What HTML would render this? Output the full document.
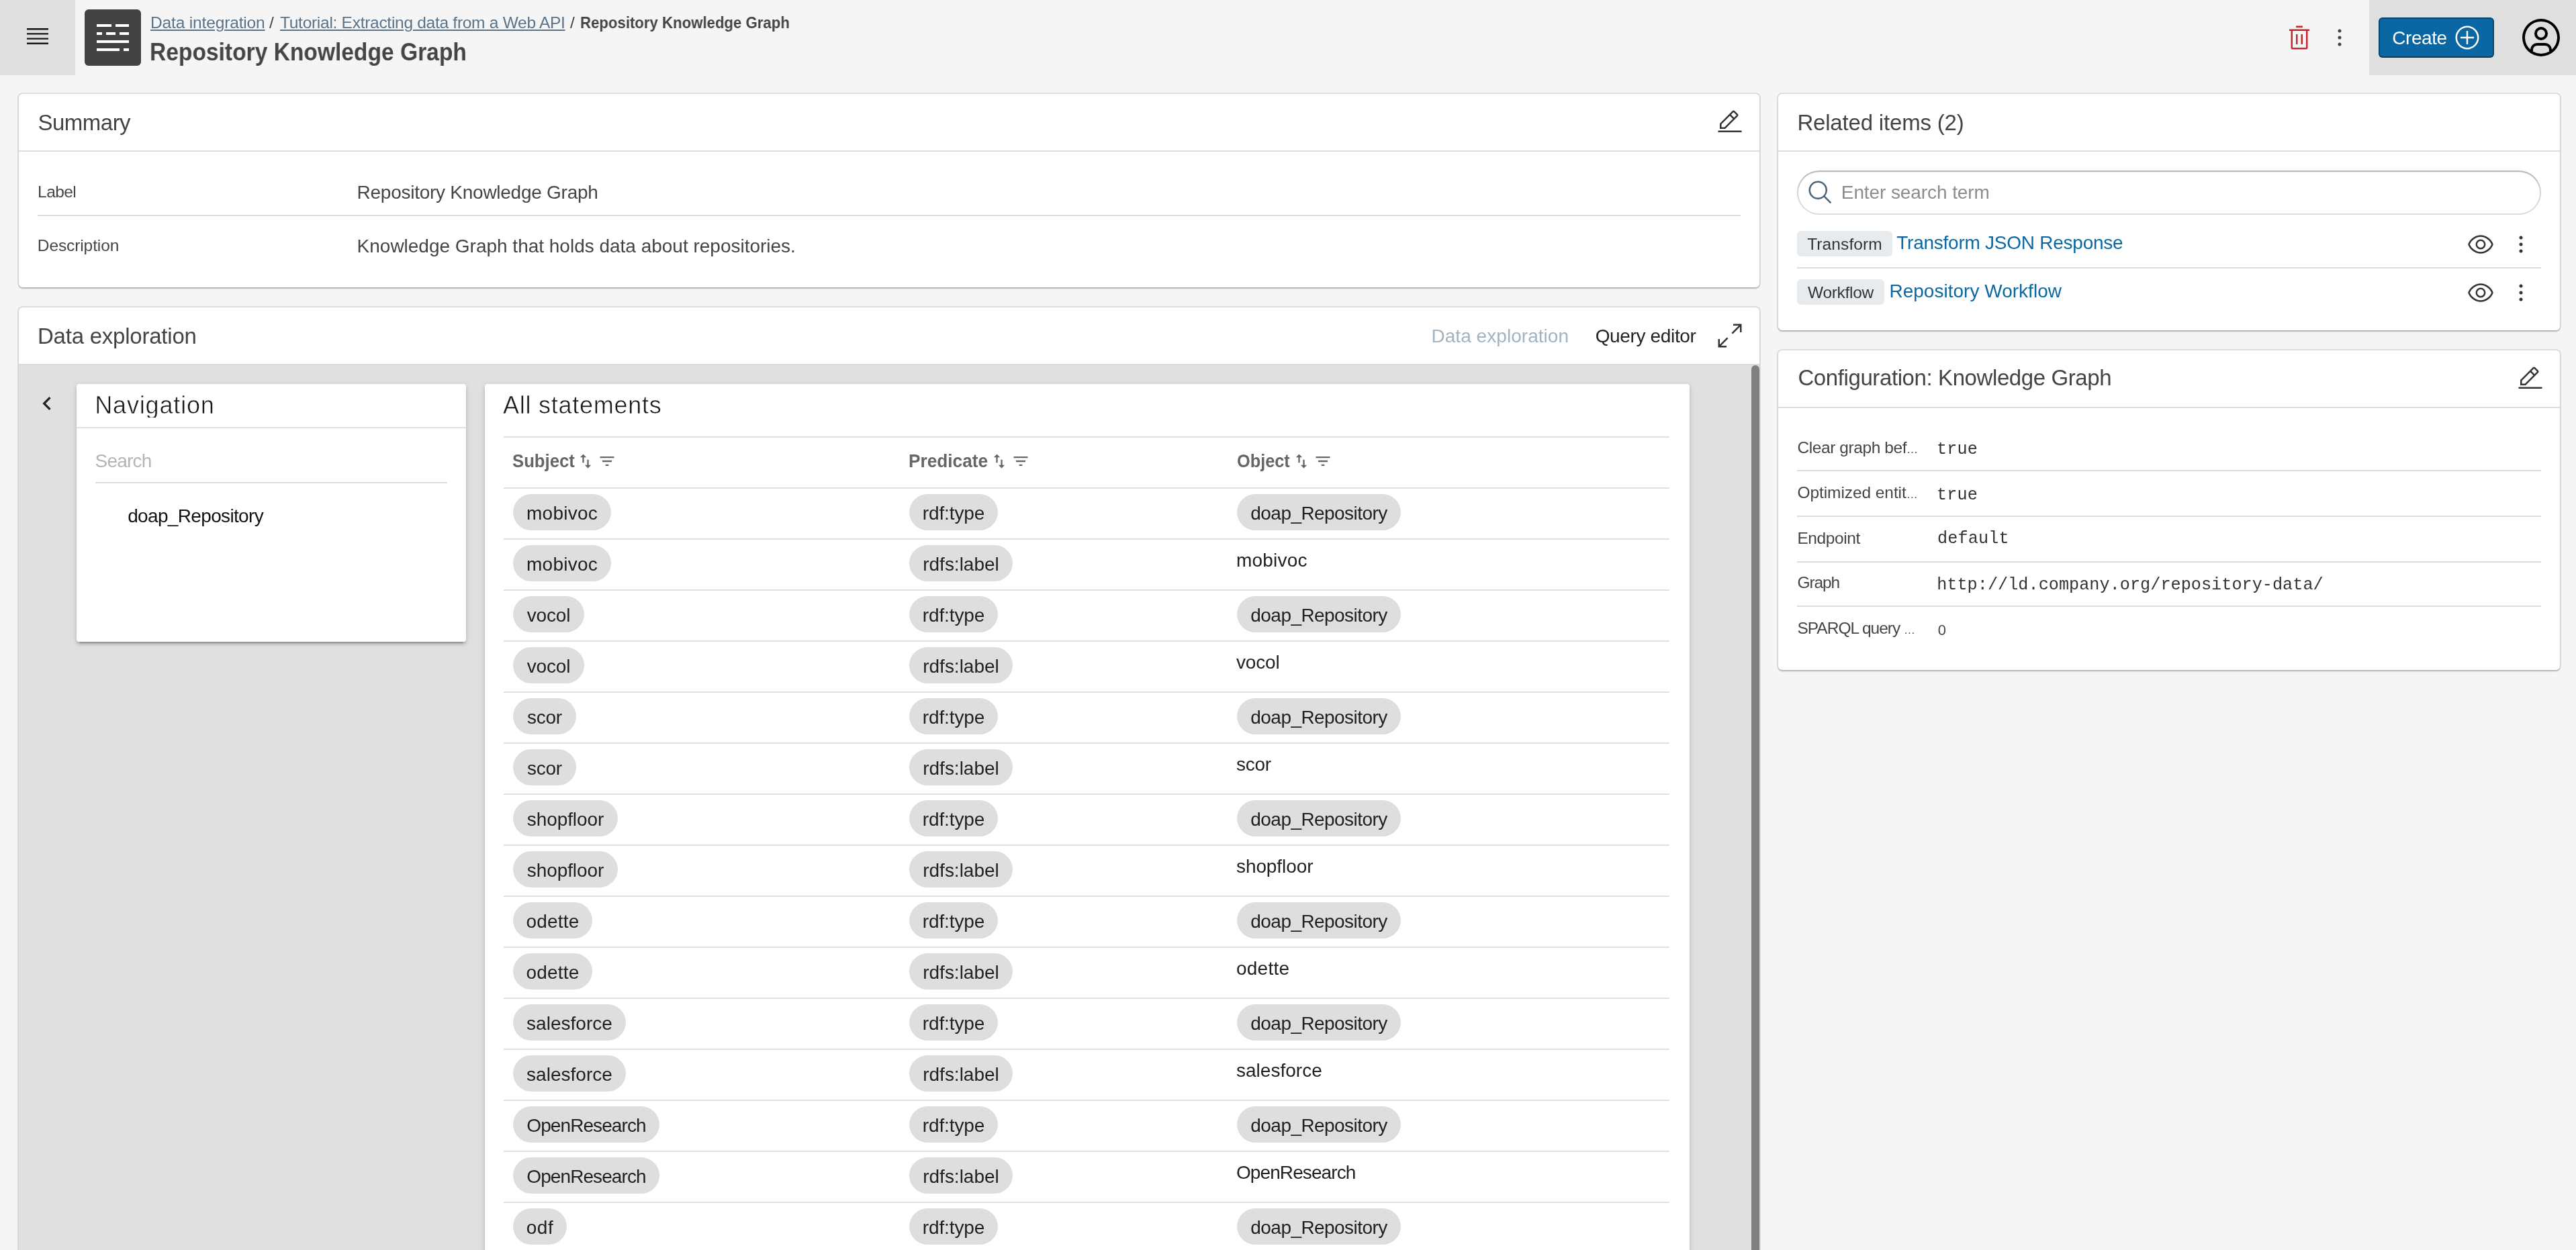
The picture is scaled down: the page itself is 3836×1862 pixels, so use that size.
<!DOCTYPE html>
<html lang="en">
<head>
<meta charset="utf-8">
<title>Repository Knowledge Graph</title>
<style>
*{box-sizing:border-box;margin:0;padding:0}
html,body{width:3836px;height:1862px;overflow:hidden;background:#f5f5f5;}
body{font-family:"Liberation Sans",sans-serif;color:#222;position:relative;font-size:28px;line-height:1;}
a{text-decoration:none;color:inherit}
svg{display:block}
.abs{position:absolute}
body>*,.mcard,.chip,.tag{will-change:transform}
.t{position:absolute;white-space:nowrap;line-height:1;}

/* header */
#menu{left:0;top:0;width:112px;height:112px;background:#dfdfdf}
#menu svg{position:absolute;left:36px;top:34px;width:40px;height:40px;fill:#161616}
#itemicon{left:126px;top:14px;width:84px;height:84px;background:#434343;border-radius:6px}
#itemicon i{position:absolute;height:4px;background:#fff;display:block}
.crumb{font-size:24.5px;color:#444}
.crumb.lk{color:#5a7389;text-decoration:underline;text-decoration-thickness:2px;text-underline-offset:2px}
b.crumb{font-weight:bold;color:#444;font-size:24.5px;transform-origin:0 50%}
#t-title{left:224px;top:58px;font-size:37px;font-weight:bold;transform-origin:0 50%;color:#444}
#hright{left:3528px;top:0;width:308px;height:112px;background:#dfdfdf}
#create{left:3542px;top:26px;width:172px;height:60px;background:#0a67a3;border-radius:6px;box-shadow:inset 0 0 0 2px rgba(16,22,26,.4),inset 0 -2px 0 rgba(16,22,26,.2);color:#fff}
#create span{position:absolute;left:22px;top:16px;font-size:28px;line-height:1}
#create svg{position:absolute;left:112px;top:10px;width:40px;height:40px;fill:#fff}

/* cards */
.card{position:absolute;background:#fff;border-radius:6px;box-shadow:0 0 0 2px rgba(16,22,26,.1),0 2px 2px rgba(16,22,26,.2)}
.ctitle{position:absolute;left:27px;font-size:33px;color:#444;white-space:nowrap;line-height:1}
.hline{position:absolute;left:0;right:0;height:2px;background:rgba(16,22,26,.15)}
.pname{position:absolute;font-size:24.5px;color:#444;white-space:nowrap;line-height:1}
.pval{position:absolute;font-size:28px;color:#444;white-space:nowrap;line-height:1}
.mono{font-family:"Liberation Mono",monospace;font-size:25.2px;color:#333}
.ico{position:absolute;fill:#333}
.el{font-style:normal;font-size:17px;letter-spacing:-0.5px}
.tag{position:absolute;height:38px;border-radius:6px;background:#e8ebee;color:#333;font-size:24.5px;line-height:38px;text-align:center;white-space:nowrap}
.tag span{position:relative;top:1px;display:inline-block}
.lnk{font-size:28px;color:#0a67a3}

/* data exploration */
#grayarea{left:0;top:84px;right:0;bottom:0;background:#e0e0e0;overflow:hidden}
.mcard{position:absolute;background:#fff;border-radius:4px;box-shadow:0 4px 4px 0 rgba(0,0,0,.14),0 6px 2px -4px rgba(0,0,0,.2),0 2px 10px 0 rgba(0,0,0,.12)}
.mtitle{position:absolute;font-size:36px;font-weight:normal;color:#1a1a1a;white-space:nowrap;line-height:1;height:36px;overflow:hidden;-webkit-text-stroke:0.55px #fff}
.tl{position:absolute;left:28px;width:1736px;height:2px;background:#e0e0e0}
.th{position:absolute;font-size:28px;font-weight:bold;color:#666;white-space:nowrap;line-height:1}
.th span{display:inline-block;transform-origin:0 50%}
.th svg{position:absolute;width:28px;height:28px;fill:#666;top:0}
.chip{position:absolute;height:54px;border-radius:27px;background:#dedede;color:#212121;font-size:28px;line-height:54px;text-align:center;white-space:nowrap}
.chip span{position:relative;top:2px;display:inline-block}
.plain{position:absolute;font-size:28px;color:#212121;white-space:nowrap;line-height:1}
/*FIT*/
#t-b1{letter-spacing:-0.15px;margin-left:-0.5px;margin-top:1.3px}
#t-s1{margin-left:1px}
#t-b2{letter-spacing:-0.28px;margin-left:1.4px;margin-top:1.3px}
#t-s2{margin-left:1px}
#t-b3{letter-spacing:0px;transform:scaleX(0.9054);margin-left:0.4px;margin-top:1.3px}
#t-title{letter-spacing:0px;transform:scaleX(0.9071);margin-left:-1.0px;margin-top:0.9px}
#t-create{letter-spacing:-0.42px;margin-left:-1.8px;margin-top:1.1px}
#t-sum{letter-spacing:-0.51px;margin-left:1.5px;margin-top:-7.7px}
#t-lab{letter-spacing:-0.58px;margin-left:1.1px;margin-top:-3.3px}
#t-desc{letter-spacing:-0.1px;margin-left:0.8px;margin-top:-3.5px}
#t-val1{letter-spacing:-0.26px;margin-left:0.6px;margin-top:-1.5px}
#t-val2{letter-spacing:-0.01px;margin-left:0.6px;margin-top:-1.1px}
#t-de{letter-spacing:-0.23px;margin-left:1.0px;margin-top:-8.5px}
#t-tab1{letter-spacing:0.04px;margin-left:0.5px;margin-top:-1.5px}
#t-tab2{letter-spacing:-0.35px;margin-left:1.7px;margin-top:-1.5px}
#t-nav{letter-spacing:0.84px;margin-left:-0.8px;margin-top:0.1px}
#t-srch{letter-spacing:-0.8px;margin-left:-0.4px;margin-top:0.7px}
#t-doap{letter-spacing:-0.66px;margin-left:0.2px;margin-top:0.9px}
#t-all{letter-spacing:0.74px;margin-left:-1px;margin-top:-0.1px}
#t-th1{letter-spacing:0px;transform:scaleX(0.9184);margin-left:-1px}
#t-th2{letter-spacing:0px;transform:scaleX(0.937);margin-left:-1.3px}
#t-th3{letter-spacing:0px;transform:scaleX(0.9044);margin-left:-0.5px}
.c-mobivoc span{letter-spacing:0.24px}
.c-vocol span{letter-spacing:-0.19px}
.c-scor span{letter-spacing:-0.28px}
.c-shopfloor span{letter-spacing:-0.09px}
.c-odette span{letter-spacing:0.22px}
.c-salesforce span{letter-spacing:0.02px}
.c-OpenResearch span{letter-spacing:-0.91px}
.c-odf span{letter-spacing:0.55px}
.c-rdftype span{letter-spacing:-0.14px}
.c-rdfslabel span{letter-spacing:-0.01px}
.c-doapRepository span{letter-spacing:-0.56px}
.p-mobivoc{letter-spacing:0.2px}
#t-rel{letter-spacing:-0.18px;margin-left:1.4px;margin-top:-8.5px}
#t-ph{letter-spacing:-0.09px;margin-left:1.8px;margin-top:1.1px}
#t-tag1{letter-spacing:0.11px}
#t-l1{letter-spacing:-0.25px;margin-left:2.3px;margin-top:0.9px}
#t-tag2{letter-spacing:-0.3px}
#t-l2{letter-spacing:0.02px;margin-left:1.4px;margin-top:0.9px}
#t-cfg{letter-spacing:-0.4px;margin-left:2.4px;margin-top:-9.9px}
#t-c1{letter-spacing:-0.42px;margin-left:0.5px;margin-top:1.1px}
#t-c2{letter-spacing:-0.08px;margin-left:0.5px;margin-top:0.1px}
#t-c3{letter-spacing:-0.39px;margin-left:0.4px;margin-top:1.1px}
#t-c4{letter-spacing:-1.07px;margin-left:0.4px;margin-top:0.9px}
#t-c5{letter-spacing:-1.0px;margin-left:0.5px;margin-top:1.3px}
#t-v1{letter-spacing:0.16px;margin-left:-0.1px;margin-top:1.3px}
#t-v2{letter-spacing:0.16px;margin-left:-0.1px;margin-top:0.5px}
#t-v3{letter-spacing:0.15px;margin-left:0.9px;margin-top:0.3px}
#t-v4{letter-spacing:0.03px;margin-left:0.2px;margin-top:0.9px}
#t-v5{letter-spacing:-0.9px;margin-left:1.8px;margin-top:0.6px}
.p-vocol{letter-spacing:-0.19px}
.p-scor{letter-spacing:-0.28px}
.p-shopfloor{letter-spacing:-0.09px}
.p-odette{letter-spacing:0.22px}
.p-salesforce{letter-spacing:0.02px}
.p-OpenResearch{letter-spacing:-0.91px}
.p-odf{letter-spacing:0.55px}
.p-rdftype{letter-spacing:-0.14px}
.p-rdfslabel{letter-spacing:-0.01px}
.p-doapRepository{letter-spacing:-0.56px}
/*ENDFIT*/
</style>
</head>
<body>

<!-- ======= HEADER ======= -->
<div id="menu" class="abs"><svg viewBox="0 0 20 20"><path d="M2 14.8H18V16H2zM2 11.2H18V12.4H2zM2 7.6H18V8.8H2zM2 4H18V5.2H2z"/></svg></div>
<div id="itemicon" class="abs">
 <i style="left:18px;top:22px;width:22px"></i><i style="left:46px;top:22px;width:20px"></i>
 <i style="left:18px;top:34px;width:8px"></i><i style="left:32px;top:34px;width:14px"></i><i style="left:52px;top:34px;width:14px"></i>
 <i style="left:18px;top:46px;width:48px"></i>
 <i style="left:18px;top:58px;width:34px"></i><i style="left:58px;top:58px;width:8px"></i>
</div>
<a class="t crumb lk" id="t-b1" style="left:224px;top:21px">Data integration</a>
<span class="t crumb" id="t-s1" style="left:400px;top:22px">/</span>
<a class="t crumb lk" id="t-b2" style="left:416px;top:21px">Tutorial: Extracting data from a Web API</a>
<span class="t crumb" id="t-s2" style="left:848px;top:22px">/</span>
<b class="t crumb" id="t-b3" style="left:864px;top:21px">Repository Knowledge Graph</b>
<div id="t-title" class="t">Repository Knowledge Graph</div>

<svg class="ico" style="left:3404px;top:35.5px;width:40px;height:40px;fill:#c7262f" viewBox="0 0 32 32"><path d="M12 12H14V24H12zM18 12H20V24H18z"/><path d="M4 6V8H6V28a2 2 0 002 2H24a2 2 0 002-2V8h2V6zM8 28V8H24V28zM12 2H20V4H12z"/></svg>
<svg class="ico" style="left:3464px;top:36px;width:40px;height:40px;fill:#444" viewBox="0 0 32 32"><circle cx="16" cy="8" r="2"/><circle cx="16" cy="16" r="2"/><circle cx="16" cy="24" r="2"/></svg>
<div id="hright" class="abs"></div>
<div id="create" class="abs"><span id="t-create">Create</span><svg viewBox="0 0 32 32"><path d="M16,4c6.6,0,12,5.4,12,12s-5.4,12-12,12S4,22.6,4,16S9.4,4,16,4 M16,2C8.3,2,2,8.3,2,16s6.3,14,14,14s14-6.3,14-14 S23.7,2,16,2z"/><path d="M24 15L17 15 17 8 15 8 15 15 8 15 8 17 15 17 15 24 17 24 17 17 24 17z"/></svg></div>
<svg class="ico" style="left:3752px;top:24px;width:64px;height:64px;fill:#000" viewBox="0 0 32 32"><path d="M16,8a5,5,0,1,0,5,5A5,5,0,0,0,16,8Zm0,8a3,3,0,1,1,3-3A3.0034,3.0034,0,0,1,16,16Z"/><path d="M16,2A14,14,0,1,0,30,16,14.0158,14.0158,0,0,0,16,2ZM10,26.3765V25a3.0033,3.0033,0,0,1,3-3h6a3.0033,3.0033,0,0,1,3,3v1.3765a11.8989,11.8989,0,0,1-12,0Zm13.9925-1.4507A5.0016,5.0016,0,0,0,19,20H13a5.0016,5.0016,0,0,0-4.9925,4.9258,12,12,0,1,1,15.985,0Z"/></svg>

<!-- ======= SUMMARY CARD ======= -->
<div class="card" id="summary" style="left:28px;top:140px;width:2592px;height:288px">
 <div class="ctitle" id="t-sum" style="top:34px">Summary</div>
 <svg class="ico" style="left:2527.5px;top:21.5px;width:40px;height:40px" viewBox="0 0 32 32"><path d="M2 26H30V28H2zM25.4 9c.8-.8.8-2 0-2.8 0 0 0 0 0 0l-3.6-3.6c-.8-.8-2-.8-2.8 0 0 0 0 0 0 0l-15 15V24h6.4L25.4 9zM20.4 4L24 7.6l-3 3L17.4 7 20.4 4zM6 22v-3.6l10-10 3.6 3.6-10 10H6z"/></svg>
 <div class="hline" style="top:84px"></div>
 <div class="pname" id="t-lab" style="left:27px;top:137px">Label</div>
 <div class="pval" id="t-val1" style="left:503px;top:134px">Repository Knowledge Graph</div>
 <div class="hline" style="top:180px;left:28px;right:28px"></div>
 <div class="pname" id="t-desc" style="left:27px;top:217px">Description</div>
 <div class="pval" id="t-val2" style="left:503px;top:214px">Knowledge Graph that holds data about repositories.</div>
</div>

<!-- ======= DATA EXPLORATION CARD ======= -->
<div class="card" id="explore" style="left:28px;top:458px;width:2592px;height:1500px">
 <div class="ctitle" id="t-de" style="top:34px">Data exploration</div>
 <div class="t" id="t-tab1" style="left:2103px;top:30px;font-size:28px;color:#a3b3c0">Data exploration</div>
 <div class="t" id="t-tab2" style="left:2346px;top:30px;font-size:28px;color:#222">Query editor</div>
 <svg class="ico" style="left:2528px;top:21.5px;width:40px;height:40px" viewBox="0 0 32 32"><path d="M20 2L20 4 26.586 4 18 12.582 19.414 14 28 5.414 28 12 30 12 30 2 20 2zM14 19.416L12.592 18 4 26.586 4 20 2 20 2 30 12 30 12 28 5.414 28 14 19.416z"/></svg>
 <div id="grayarea" class="abs">
  <div class="abs" style="left:0;right:0;top:0;height:2px;background:#d8dadc"></div>
  <svg class="ico" style="left:21.5px;top:39px;width:40px;height:40px;fill:#222" viewBox="0 0 24 24"><path d="M15.41 7.41L14 6l-6 6 6 6 1.41-1.41L10.83 12z"/></svg>
  <!-- navigation -->
  <div class="mcard" style="left:86px;top:30px;width:580px;height:384px">
   <div class="mtitle" id="t-nav" style="left:28px;top:14px">Navigation</div>
   <div class="abs" style="left:0;right:0;top:64px;height:2px;background:#e0e0e0"></div>
   <div class="t" id="t-srch" style="left:28px;top:100px;font-size:28px;color:#b5b5b5">Search</div>
   <div class="abs" style="left:28px;right:28px;top:146px;height:2px;background:#dcdcdc"></div>
   <div class="t" id="t-doap" style="left:76px;top:182px;font-size:28px;color:#111">doap_Repository</div>
  </div>
  <!-- statements -->
  <div class="mcard" id="stm" style="left:694px;top:30px;width:1794px;height:1500px">
   <div class="mtitle" id="t-all" style="left:28px;top:14px">All statements</div>
   <div class="th" style="left:42px;top:101px"><span id="t-th1">Subject</span><svg style="left:94px" viewBox="0 0 24 24"><path d="M9 3L5 6.99h3V14h2V6.99h3L9 3zm7 14.01V10h-2v7.01h-3L15 21l4-3.99h-3z"/></svg><svg style="left:126px" viewBox="0 0 24 24"><path d="M10 18h4v-2h-4v2zM3 6v2h18V6H3zm3 7h12v-2H6v2z"/></svg></div>
   <div class="th" style="left:632px;top:101px"><span id="t-th2">Predicate</span><svg style="left:120px" viewBox="0 0 24 24"><path d="M9 3L5 6.99h3V14h2V6.99h3L9 3zm7 14.01V10h-2v7.01h-3L15 21l4-3.99h-3z"/></svg><svg style="left:152px" viewBox="0 0 24 24"><path d="M10 18h4v-2h-4v2zM3 6v2h18V6H3zm3 7h12v-2H6v2z"/></svg></div>
   <div class="th" style="left:1120px;top:101px"><span id="t-th3">Object</span><svg style="left:82px" viewBox="0 0 24 24"><path d="M9 3L5 6.99h3V14h2V6.99h3L9 3zm7 14.01V10h-2v7.01h-3L15 21l4-3.99h-3z"/></svg><svg style="left:114px" viewBox="0 0 24 24"><path d="M10 18h4v-2h-4v2zM3 6v2h18V6H3zm3 7h12v-2H6v2z"/></svg></div>
   <!--ROWS-->
   <div class="tl" style="top:78px"></div>
   <div class="tl" style="top:154px"></div>
   <div class="tl" style="top:230px"></div>
   <div class="chip c-mobivoc" style="left:42px;top:164px;width:146px"><span>mobivoc</span></div>
   <div class="chip c-rdftype" style="left:632px;top:164px;width:132px"><span>rdf:type</span></div>
   <div class="chip c-doapRepository" style="left:1120px;top:164px;width:244px"><span>doap_Repository</span></div>
   <div class="tl" style="top:306px"></div>
   <div class="chip c-mobivoc" style="left:42px;top:240px;width:146px"><span>mobivoc</span></div>
   <div class="chip c-rdfslabel" style="left:632px;top:240px;width:154px"><span>rdfs:label</span></div>
   <div class="plain p-mobivoc" style="left:1119px;top:249px">mobivoc</div>
   <div class="tl" style="top:382px"></div>
   <div class="chip c-vocol" style="left:42px;top:316px;width:106px"><span>vocol</span></div>
   <div class="chip c-rdftype" style="left:632px;top:316px;width:132px"><span>rdf:type</span></div>
   <div class="chip c-doapRepository" style="left:1120px;top:316px;width:244px"><span>doap_Repository</span></div>
   <div class="tl" style="top:458px"></div>
   <div class="chip c-vocol" style="left:42px;top:392px;width:106px"><span>vocol</span></div>
   <div class="chip c-rdfslabel" style="left:632px;top:392px;width:154px"><span>rdfs:label</span></div>
   <div class="plain p-vocol" style="left:1119px;top:401px">vocol</div>
   <div class="tl" style="top:534px"></div>
   <div class="chip c-scor" style="left:42px;top:468px;width:94px"><span>scor</span></div>
   <div class="chip c-rdftype" style="left:632px;top:468px;width:132px"><span>rdf:type</span></div>
   <div class="chip c-doapRepository" style="left:1120px;top:468px;width:244px"><span>doap_Repository</span></div>
   <div class="tl" style="top:610px"></div>
   <div class="chip c-scor" style="left:42px;top:544px;width:94px"><span>scor</span></div>
   <div class="chip c-rdfslabel" style="left:632px;top:544px;width:154px"><span>rdfs:label</span></div>
   <div class="plain p-scor" style="left:1119px;top:553px">scor</div>
   <div class="tl" style="top:686px"></div>
   <div class="chip c-shopfloor" style="left:42px;top:620px;width:156px"><span>shopfloor</span></div>
   <div class="chip c-rdftype" style="left:632px;top:620px;width:132px"><span>rdf:type</span></div>
   <div class="chip c-doapRepository" style="left:1120px;top:620px;width:244px"><span>doap_Repository</span></div>
   <div class="tl" style="top:762px"></div>
   <div class="chip c-shopfloor" style="left:42px;top:696px;width:156px"><span>shopfloor</span></div>
   <div class="chip c-rdfslabel" style="left:632px;top:696px;width:154px"><span>rdfs:label</span></div>
   <div class="plain p-shopfloor" style="left:1119px;top:705px">shopfloor</div>
   <div class="tl" style="top:838px"></div>
   <div class="chip c-odette" style="left:42px;top:772px;width:118px"><span>odette</span></div>
   <div class="chip c-rdftype" style="left:632px;top:772px;width:132px"><span>rdf:type</span></div>
   <div class="chip c-doapRepository" style="left:1120px;top:772px;width:244px"><span>doap_Repository</span></div>
   <div class="tl" style="top:914px"></div>
   <div class="chip c-odette" style="left:42px;top:848px;width:118px"><span>odette</span></div>
   <div class="chip c-rdfslabel" style="left:632px;top:848px;width:154px"><span>rdfs:label</span></div>
   <div class="plain p-odette" style="left:1119px;top:857px">odette</div>
   <div class="tl" style="top:990px"></div>
   <div class="chip c-salesforce" style="left:42px;top:924px;width:168px"><span>salesforce</span></div>
   <div class="chip c-rdftype" style="left:632px;top:924px;width:132px"><span>rdf:type</span></div>
   <div class="chip c-doapRepository" style="left:1120px;top:924px;width:244px"><span>doap_Repository</span></div>
   <div class="tl" style="top:1066px"></div>
   <div class="chip c-salesforce" style="left:42px;top:1000px;width:168px"><span>salesforce</span></div>
   <div class="chip c-rdfslabel" style="left:632px;top:1000px;width:154px"><span>rdfs:label</span></div>
   <div class="plain p-salesforce" style="left:1119px;top:1009px">salesforce</div>
   <div class="tl" style="top:1142px"></div>
   <div class="chip c-OpenResearch" style="left:42px;top:1076px;width:218px"><span>OpenResearch</span></div>
   <div class="chip c-rdftype" style="left:632px;top:1076px;width:132px"><span>rdf:type</span></div>
   <div class="chip c-doapRepository" style="left:1120px;top:1076px;width:244px"><span>doap_Repository</span></div>
   <div class="tl" style="top:1218px"></div>
   <div class="chip c-OpenResearch" style="left:42px;top:1152px;width:218px"><span>OpenResearch</span></div>
   <div class="chip c-rdfslabel" style="left:632px;top:1152px;width:154px"><span>rdfs:label</span></div>
   <div class="plain p-OpenResearch" style="left:1119px;top:1161px">OpenResearch</div>
   <div class="tl" style="top:1294px"></div>
   <div class="chip c-odf" style="left:42px;top:1228px;width:80px"><span>odf</span></div>
   <div class="chip c-rdftype" style="left:632px;top:1228px;width:132px"><span>rdf:type</span></div>
   <div class="chip c-doapRepository" style="left:1120px;top:1228px;width:244px"><span>doap_Repository</span></div>
   <!--/ROWS-->
  </div>
  <div class="abs" style="left:2580px;top:2px;width:12px;height:1500px;background:#808080;border-radius:6px"></div>
 </div>
</div>

<!-- ======= RELATED ITEMS ======= -->
<div class="card" id="related" style="left:2648px;top:140px;width:1164px;height:352px">
 <div class="ctitle" id="t-rel" style="top:34px">Related items (2)</div>
 <div class="hline" style="top:84px"></div>
 <div class="abs" id="search" style="left:28px;top:114px;width:1108px;height:66px;border-radius:33px;background:#fff;box-shadow:inset 0 0 0 2px rgba(16,22,26,.15),inset 0 2px 2px rgba(16,22,26,.2)"></div>
 <svg class="ico" style="left:42.5px;top:126.5px;width:40px;height:40px;fill:#4c637a" viewBox="0 0 32 32"><path d="M29,27.5859l-7.5521-7.5521a11.0177,11.0177,0,1,0-1.4141,1.4141L27.5859,29ZM4,13a9,9,0,1,1,9,9A9.01,9.01,0,0,1,4,13Z"/></svg>
 <div class="t" id="t-ph" style="left:92px;top:132px;font-size:28px;color:#8c8c8c">Enter search term</div>
 <div class="tag" style="left:28px;top:204px;width:142px"><span id="t-tag1">Transform</span></div>
 <div class="t lnk" id="t-l1" style="left:174px;top:207px">Transform JSON Response</div>
 <svg class="ico" style="left:1026px;top:204px;width:40px;height:40px" viewBox="0 0 32 32"><path d="M30.94,15.66A16.69,16.69,0,0,0,16,5,16.69,16.69,0,0,0,1.06,15.66a1,1,0,0,0,0,.68A16.69,16.69,0,0,0,16,27,16.69,16.69,0,0,0,30.94,16.34,1,1,0,0,0,30.94,15.66ZM16,25c-5.3,0-10.9-3.93-12.93-9C5.1,10.93,10.7,7,16,7s10.9,3.93,12.93,9C26.9,21.07,21.3,25,16,25Z"/><path d="M16,10a6,6,0,1,0,6,6A6,6,0,0,0,16,10Zm0,10a4,4,0,1,1,4-4A4,4,0,0,1,16,20Z"/></svg>
 <svg class="ico" style="left:1086px;top:204px;width:40px;height:40px" viewBox="0 0 32 32"><circle cx="16" cy="8" r="2"/><circle cx="16" cy="16" r="2"/><circle cx="16" cy="24" r="2"/></svg>
 <div class="hline" style="top:258px;left:28px;right:28px"></div>
 <div class="tag" style="left:28px;top:276px;width:130px"><span id="t-tag2">Workflow</span></div>
 <div class="t lnk" id="t-l2" style="left:164px;top:279px">Repository Workflow</div>
 <svg class="ico" style="left:1026px;top:276px;width:40px;height:40px" viewBox="0 0 32 32"><path d="M30.94,15.66A16.69,16.69,0,0,0,16,5,16.69,16.69,0,0,0,1.06,15.66a1,1,0,0,0,0,.68A16.69,16.69,0,0,0,16,27,16.69,16.69,0,0,0,30.94,16.34,1,1,0,0,0,30.94,15.66ZM16,25c-5.3,0-10.9-3.93-12.93-9C5.1,10.93,10.7,7,16,7s10.9,3.93,12.93,9C26.9,21.07,21.3,25,16,25Z"/><path d="M16,10a6,6,0,1,0,6,6A6,6,0,0,0,16,10Zm0,10a4,4,0,1,1,4-4A4,4,0,0,1,16,20Z"/></svg>
 <svg class="ico" style="left:1086px;top:275.5px;width:40px;height:40px" viewBox="0 0 32 32"><circle cx="16" cy="8" r="2"/><circle cx="16" cy="16" r="2"/><circle cx="16" cy="24" r="2"/></svg>
</div>

<!-- ======= CONFIG ======= -->
<div class="card" id="config" style="left:2648px;top:522px;width:1164px;height:476px">
 <div class="ctitle" id="t-cfg" style="top:34px">Configuration: Knowledge Graph</div>
 <svg class="ico" style="left:1100px;top:22px;width:40px;height:40px" viewBox="0 0 32 32"><path d="M2 26H30V28H2zM25.4 9c.8-.8.8-2 0-2.8 0 0 0 0 0 0l-3.6-3.6c-.8-.8-2-.8-2.8 0 0 0 0 0 0 0l-15 15V24h6.4L25.4 9zM20.4 4L24 7.6l-3 3L17.4 7 20.4 4zM6 22v-3.6l10-10 3.6 3.6-10 10H6z"/></svg>
 <div class="hline" style="top:84px"></div>
 <div class="pname" id="t-c1" style="left:28px;top:132px">Clear graph bef<i class="el">…</i></div>
 <div class="pval mono" id="t-v1" style="left:236px;top:134px">true</div>
 <div class="hline" style="top:178px;left:28px;right:28px"></div>
 <div class="pname" id="t-c2" style="left:28px;top:200px">Optimized entit<i class="el">…</i></div>
 <div class="pval mono" id="t-v2" style="left:236px;top:202px">true</div>
 <div class="hline" style="top:246px;left:28px;right:28px"></div>
 <div class="pname" id="t-c3" style="left:28px;top:267px">Endpoint</div>
 <div class="pval mono" id="t-v3" style="left:236px;top:268px">default</div>
 <div class="hline" style="top:314px;left:28px;right:28px"></div>
 <div class="pname" id="t-c4" style="left:28px;top:333px">Graph</div>
 <div class="pval mono" id="t-v4" style="left:236px;top:336px">http://ld.company.org/repository-data/</div>
 <div class="hline" style="top:380px;left:28px;right:28px"></div>
 <div class="pname" id="t-c5" style="left:28px;top:401px">SPARQL query <i class="el">…</i></div>
 <div class="pval" id="t-v5" style="left:236px;top:405px;font-size:22px">0</div>
</div>

</body>
</html>
